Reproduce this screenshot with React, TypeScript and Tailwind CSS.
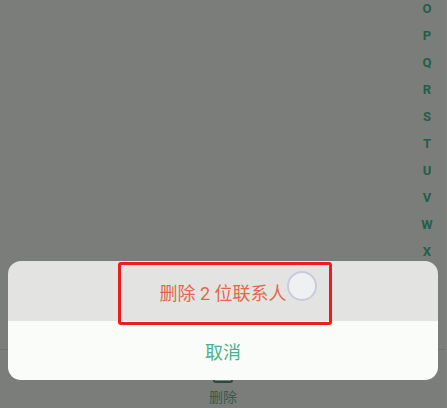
const LETTERS = ["O", "P", "Q", "R", "S", "T", "U", "V", "W", "X"];

const FONT = "font-['Roboto','Noto_Sans_CJK_SC',sans-serif]";

export default function App() {
  return (
    <div className={`relative flex h-[408px] w-[447px] flex-col overflow-hidden border-r border-[#858784] bg-[#7b7d7a] ${FONT}`}>
      {/* Index bar */}
      <div className="-mt-[5px] mr-[13px] flex w-3 flex-col items-center self-end">
        {LETTERS.map((letter) => (
          <div key={letter} className="flex h-[27px] items-center text-[13px] font-bold text-[#1f5f4a]">
            {letter}
          </div>
        ))}
      </div>

      {/* Toolbar behind the sheet */}
      <div className="mt-auto flex h-[59px] flex-col items-center justify-end border-t border-[#70726e] pb-[2px]">
        <div className="mb-[5px] h-[6px] w-[20px] rounded-b-[3px] border-x-2 border-b-2 border-[#2a4a3e]" />
        <div className="text-[14px] leading-[18px] text-[#2f5c4c]">删除</div>
      </div>

      {/* Action sheet */}
      <div className="absolute left-2 top-[261px] w-[430px] overflow-hidden rounded-[13px]">
        <div className="flex h-[60px] items-center justify-center bg-[#e3e4e1] pt-[4px] text-[18px] text-[#e2664b]">
          删除 2 位联系人
        </div>
        <div className="flex h-[59px] items-center justify-center bg-[#fafcf9] pt-[3px] text-[18px] text-[#4cb08c]">
          取消
        </div>
      </div>

      {/* Annotation */}
      <div className="absolute left-[118px] top-[262px] h-[63px] w-[214px] rounded-[3px] border-[3px] border-[#ee1c1c]" />
      <div className="absolute left-[287px] top-[271px] h-[30px] w-[30px] rounded-full border-2 border-[#c9cbdc] bg-[#eef0f2]" />
    </div>
  );
}
